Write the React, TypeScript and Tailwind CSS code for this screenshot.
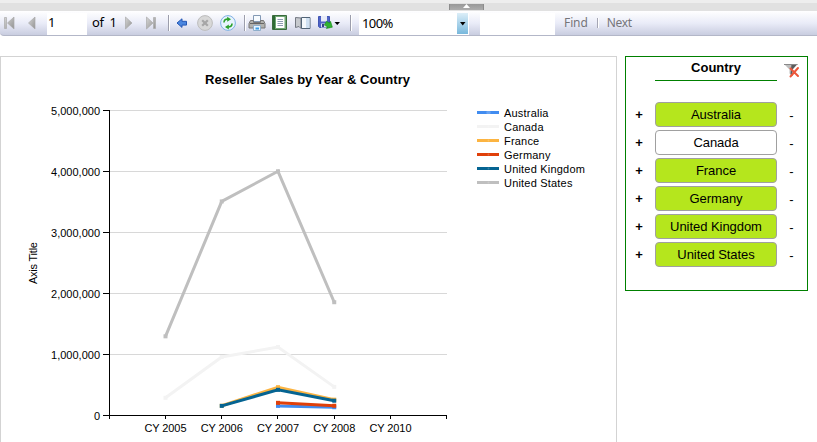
import React, { useState } from 'react';

interface Series {
  name: string;
  color: string;
  points: [number, number][];
}

const years = ['CY 2005', 'CY 2006', 'CY 2007', 'CY 2008', 'CY 2010'];
const ticks = [5000000, 4000000, 3000000, 2000000, 1000000, 0];
const countries = ['Australia', 'Canada', 'France', 'Germany', 'United Kingdom', 'United States'];

// points are [year index, sales]
const series: Series[] = [
  { name: 'Australia', color: '#418cf0', points: [[2, 158000], [3, 136000]] },
  { name: 'Canada', color: '#f3f3f3', points: [[0, 290000], [1, 960000], [2, 1125000], [3, 470000]] },
  { name: 'France', color: '#fcb441', points: [[1, 160000], [2, 465000], [3, 260000]] },
  { name: 'Germany', color: '#e0400a', points: [[2, 208000], [3, 160000]] },
  { name: 'United Kingdom', color: '#056492', points: [[1, 158000], [2, 422000], [3, 243000]] },
  { name: 'United States', color: '#bfbfbf', points: [[0, 1300000], [1, 3515000], [2, 4010000], [3, 1860000]] },
];

const xPos = (i: number) => 164.5 + i * 56.25;
const yPos = (value: number) => 358.5 - (value / 5000000) * 304.5;

const Separator: React.FC<{ className?: string }> = ({ className = '' }) => (
  <div className={`w-0.5 h-4 shrink-0 bg-[#9c9eac] border-r border-white ${className}`} />
);

const Toolbar: React.FC = () => {
  const [page, setPage] = useState('1');
  const [search, setSearch] = useState('');

  return (
    <div className="h-[25px] flex items-center bg-linear-to-b from-white via-[#eaecf8] to-[#c9cde0] border-b border-[#b3b7c8] rounded-bl-sm text-[13px] leading-none font-['Noto_Sans',sans-serif]">
      <svg className="shrink-0" width="47" height="24">
        <defs>
          <linearGradient id="nav" x1="0" y1="0" x2="1" y2="1">
            <stop offset="0" stopColor="#d6d6d6" />
            <stop offset="1" stopColor="#929292" />
          </linearGradient>
        </defs>
        <path d="M4.5 6.5h2v11h-2zM14 6v12L7.5 12z" fill="url(#nav)" stroke="#aaa" strokeWidth="0.7" />
        <path d="M35 6v12L28.5 12z" fill="url(#nav)" stroke="#aaa" strokeWidth="0.7" />
      </svg>
      <input
        value={page}
        onChange={e => setPage(e.target.value)}
        className="w-10 h-[22px] mt-0.5 shrink-0 bg-white pl-px pb-1 outline-none text-black"
      />
      <span className="w-[38px] pl-[5px] shrink-0 whitespace-pre tracking-[-0.4px] -mt-0.5">of  1</span>
      <svg className="shrink-0" width="42" height="24">
        <path d="M.5 6v12L7 12z" fill="url(#nav)" stroke="#aaa" strokeWidth="0.7" />
        <path d="M21.5 6v12L28 12zM28.5 6.5h2v11h-2z" fill="url(#nav)" stroke="#aaa" strokeWidth="0.7" />
      </svg>
      <Separator className="ml-px" />
      <svg className="shrink-0" width="73" height="24">
        <path d="M7 12l5-4.2v2.5h4.5v3.8H12v2.3z" fill="#4a86df" stroke="#2456b4" />
        <circle cx="35" cy="12" r="7.4" fill="#d8d8d8" stroke="#bdbdbd" />
        <path d="M32.2 9.2l5.6 5.6M37.8 9.2l-5.6 5.6" stroke="#a6a6a6" strokeWidth="2.2" />
        <circle cx="58" cy="12" r="7.4" fill="#e7f3fd" stroke="#7fb1e4" />
        <path d="M54 11.5c0-2.5 1.500-3.500 4-3.500" fill="none" stroke="#2ba12b" strokeWidth="1.6" />
        <path d="M57.2 5.8l3.8 2.4-3.8 2.6z" fill="#2ba12b" />
        <path d="M62 12.5c0 2.500-1.500 3.500-4 3.500" fill="none" stroke="#2ba12b" strokeWidth="1.6" />
        <path d="M58.8 13.4l-3.8 2.6 3.8 2.4z" fill="#2ba12b" />
      </svg>
      <Separator className="ml-px" />
      <svg className="shrink-0" width="104" height="24">
        {/* printer */}
        <path d="M7.5 4.5h7v6h-7z" fill="#f7fbff" stroke="#8399b4" />
        <path d="M4.5 9.5h3v2h7v-2h3l1.500 3v4.500h-16v-4.500z" fill="#b2b2ae" stroke="#777" />
        <path d="M4 12.500h14" stroke="#666" />
        <path d="M7.500 14.500h7v5h-7z" fill="#e8f5ff" stroke="#8faecb" />
        <path d="M9.5 17.500h3.500" stroke="#3e9ee5" strokeWidth="2" />
        {/* print layout */}
        <path d="M26.5 4.500h14v14h-14z" fill="#6fa673" stroke="#3a6a3c" />
        <path d="M27 5h2v13h-2z" fill="#2d6a34" />
        <path d="M30 6h8.500v11H30z" fill="#fff" />
        <path d="M31.500 8.500h5.500M31.500 10.500h5.500M31.500 12.500h5.500M31.500 14.500h5.500" stroke="#8d9cb2" />
        {/* page setup */}
        <path d="M49.500 6.500l5.500.5v10.500l-2-2-3.500 1z" fill="#c6c9ce" stroke="#747982" />
        <path d="M55.500 6.500h8.500v11h-8.500z" fill="#f4f8fc" stroke="#526477" />
        <path d="M60 7h3.500v10H60z" fill="#cfe0f2" />
        {/* export */}
        <path d="M72.500 5.500h11v11h-10l-1-1z" fill="#4f63c6" stroke="#4155b4" />
        <path d="M75 5h6v5.500h-6z" fill="#e7ebf8" />
        <path d="M75 12.500h6v4h-6z" fill="#dce1f0" />
        <path d="M76 13h2v3h-2z" fill="#344287" />
        <path d="M79 12h3.500v-2l4.500 4.200-4.500 4.200v-2H79z" transform="rotate(30 83 14)" fill="#31b331" stroke="#168319" strokeWidth="0.5" />
        <path d="M88.500 11h5.500l-2.750 3z" fill="#000" />
      </svg>
      <Separator />
      <button className="w-[110px] h-[22px] mt-0.5 ml-[7px] shrink-0 flex justify-between bg-white">
        <span className="pl-[3px] pt-1 tracking-[-0.6px]">100%</span>
        <svg className="mr-px h-[21px] bg-linear-to-b from-[#dceef8] to-[#77b8dc]" width="11" height="21">
          <path d="M3 9h5.500l-2.750 3.500z" fill="#000" />
        </svg>
      </button>
      <input
        value={search}
        onChange={e => setSearch(e.target.value)}
        className="w-[75px] h-[22px] mt-0.5 ml-[11px] shrink-0 bg-white outline-none"
      />
      <button className="ml-[9px] text-xs leading-none tracking-[-0.1px] text-[#757579]">Find</button>
      <div className="w-0.5 h-2.5 ml-[9px] bg-[#a5a6b4] border-r border-white" />
      <button className="ml-2 text-xs leading-none tracking-[-0.3px] text-[#757579]">Next</button>
    </div>
  );
};

const SalesChart: React.FC = () => (
  <svg width="615" height="385" className="block" fontSize="11">
    <text x="306.5" y="27" textAnchor="middle" fontSize="13" fontWeight="bold" textLength="205">Reseller Sales by Year &amp; Country</text>
    <text x="36" y="206" textAnchor="middle" transform="rotate(-90 36 206)" textLength="42">Axis Title</text>

    {ticks.map(tick => {
      const y = Math.floor(yPos(tick) - 0.1) + 0.5;
      return (
        <g key={tick}>
          {tick > 0 && <path d={`M109 ${y}H446`} stroke="#d8d8d8" />}
          <path d={`M102 ${y}H108`} stroke="#000" />
          <text x="99" y={y + 4} textAnchor="end">{tick.toLocaleString('en-US')}</text>
        </g>
      );
    })}

    <path d="M108.500 53V362M108 358.500H446" stroke="#000" fill="none" />
    <path d="M164.500 358v4M220.500 358v4M276.500 358v4M333.500 358v4M389.500 358v4M445.500 358v4" stroke="#000" />
    {years.map((year, i) => (
      <text key={year} x={xPos(i)} y="375" textAnchor="middle" textLength="42">{year}</text>
    ))}

    {series.map(({ name, color, points }) => (
      <g key={name}>
        <polyline
          points={points.map(([i, value]) => `${xPos(i)},${yPos(value)}`).join(' ')}
          fill="none"
          stroke={color}
          strokeWidth="3"
        />
        {points.map(([i, value]) => (
          <rect key={i} x={xPos(i) - 2} y={yPos(value) - 2} width="4" height="4" fill={color} />
        ))}
      </g>
    ))}

    {series.map(({ name, color }, i) => (
      <g key={name}>
        <path d={`M476 ${55.5 + i * 14}h22`} stroke={color} strokeWidth="3" />
        <circle cx="487.500" cy={55.5 + i * 14} r={i === 0 ? 2.2 : 1} fill="#fff" opacity="0.2" />
        <text x="503" y={60 + i * 14} letterSpacing="0.2">{name}</text>
      </g>
    ))}
  </svg>
);

const CountryFilter: React.FC = () => {
  const [selected, setSelected] = useState<string[]>(countries.filter(c => c !== 'Canada'));

  const add = (country: string) => setSelected([...selected.filter(c => c !== country), country]);
  const remove = (country: string) => setSelected(selected.filter(c => c !== country));

  return (
    <div className="w-[183px] h-[235px] ml-2 shrink-0 border border-[#008000]">
      <div className="h-[45px] flex">
        <h2 className="w-[122px] h-6 ml-[29px] pt-[3px] border-b border-[#008000] text-center text-[13px] leading-4 font-bold">Country</h2>
        <button className="ml-1.5 h-6 w-[18px] shrink-0" onClick={() => setSelected([])} aria-label="Clear filter">
          <svg width="18" height="20">
            <path d="M1 5h13.500l-5 5.500v6.500l-3-2.500v-4z" fill="#bdbdbd" />
            <path d="M8.500 5h6l-5 5.500v6.500l-2-1.500z" fill="#5c5c5c" />
            <path d="M1 5.500h13.500" stroke="#8a8a8a" />
            <path d="M7.500 9.500l7.500 7.500M15 9l-7.500 8.500" stroke="#ed573b" strokeWidth="2" strokeLinecap="round" />
          </svg>
        </button>
      </div>
      <div className="flex flex-col gap-[3px]">
        {countries.map(country => (
          <div key={country} className="h-[25px] flex items-center text-[13px]">
            <button className="w-[29px] pr-[3px] pt-px font-bold leading-4 text-center" onClick={() => add(country)}>+</button>
            <div
              className={`w-[122px] h-[25px] border border-[#a0a0a0] rounded-[4px] text-center leading-6 tracking-[-0.05px] ${
                selected.includes(country) ? 'bg-[#b5e61d]' : 'bg-white'
              }`}
            >
              {country}
            </div>
            <button className="w-[29px] leading-4 pt-[3px] text-center" onClick={() => remove(country)}>-</button>
          </div>
        ))}
      </div>
    </div>
  );
};

export default function App() {
  return (
    <div className="h-screen overflow-hidden bg-white text-black font-['Liberation_Sans',Arial,sans-serif]">
      <div className="h-[11px] flex justify-center bg-[#e1e1e1] border-t-[3px] border-[#eee]">
        <div className="w-[35px] h-1.5 mt-px ml-[116px] flex justify-center bg-linear-to-b from-[#989898] to-[#adadad] border-x border-[#8c8c8c]">
          <svg width="7" height="4">
            <path d="M0 4l3.500-4L7 4z" fill="#fff" />
          </svg>
        </div>
      </div>
      <Toolbar />
      <div className="flex items-start mt-5">
        <div className="w-[617px] h-[400px] shrink-0 border border-[#d3d3d3]">
          <SalesChart />
        </div>
        <CountryFilter />
      </div>
    </div>
  );
}
